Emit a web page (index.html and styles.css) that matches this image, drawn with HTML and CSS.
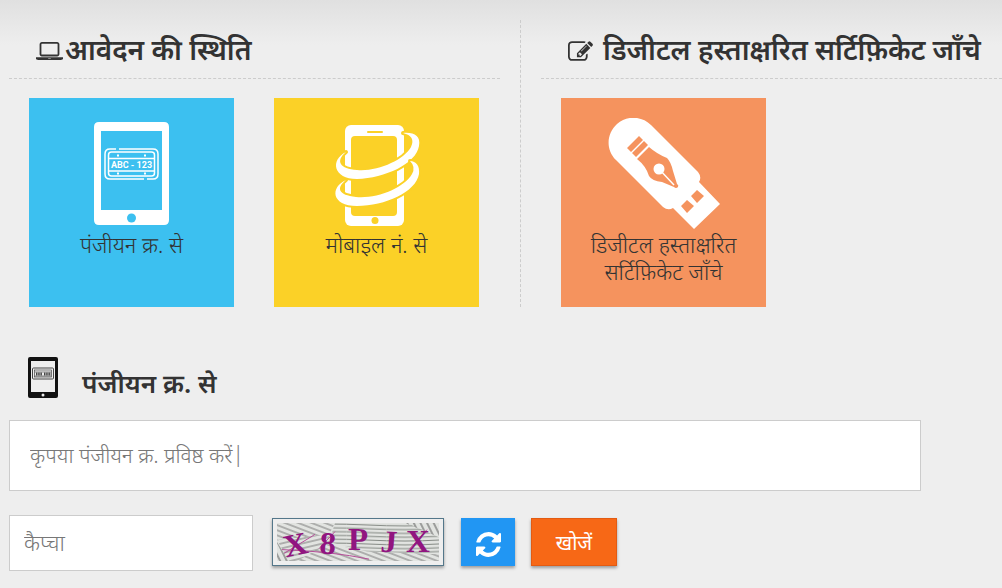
FILE: index.html
```html
<!DOCTYPE html>
<html lang="hi">
<head>
<meta charset="utf-8">
<meta name="viewport" content="width=device-width, initial-scale=1">
<title>आवेदन की स्थिति</title>
<link rel="stylesheet" href="styles.css">
</head>
<body>
<main class="page">
  <div class="services">
    <section class="service service-status">
      <h2 class="service-title">
        <svg class="icon-laptop" viewBox="0 256 1920 1280" aria-hidden="true"><path d="M416 1280q-66 0-113-47t-47-113v-704q0-66 47-113t113-47h1088q66 0 113 47t47 113v704q0 66-47 113t-113 47h-1088zm-32-864v704q0 13 9.500 22.500t22.500 9.500h1088q13 0 22.500-9.500t9.500-22.500v-704q0-13-9.500-22.500t-22.500-9.500h-1088q-13 0-22.500 9.500t-9.500 22.500zm1376 928h160v96q0 40-47 68t-113 28h-1600q-66 0-113-28t-47-68v-96h1760zm-720 96q16 0 16-16t-16-16h-160q-16 0-16 16t16 16h160z"/></svg>
        <span>आवेदन की स्थिति</span>
      </h2>
      <div class="tiles">
        <a class="tile tile-blue" href="#registration">
          <svg class="tile-art" viewBox="0 0 112 112" aria-hidden="true">
            <path fill="#fff" fill-rule="evenodd" d="M23 4h65q5 0 5 5v93q0 5-5 5h-65q-5 0-5-5v-93q0-5 5-5zM25 13v79h61v-79z"/>
            <circle cx="55.500" cy="100" r="4.500" fill="#3cc0f0"/>
            <g fill="none" stroke="#fff">
              <path d="M40 31h-6q-5 0-5 5v20q0 5 5 5h34M43 31h34q5 0 5 5v20q0 5-5 5h-6" stroke-width="1.500"/>
              <rect x="32.500" y="34" width="46" height="24" rx="3" stroke-width="1.500"/>
              <path d="M33 40.500h45M33 53h45" stroke-width="1.500"/>
              <path d="M41 37.500h2M68 37.500h2M41 55.500h2M68 55.500h2" stroke-width="2"/>
            </g>
            <text class="plate-text" x="55.500" y="50" text-anchor="middle">ABC - 123</text>
          </svg>
          <span class="tile-label">पंजीयन क्र. से</span>
        </a>
        <a class="tile tile-yellow" href="#mobile">
          <svg class="tile-art" viewBox="0 0 112 112" aria-hidden="true">
            <rect x="24" y="7" width="59" height="101" rx="6" fill="#fff"/>
            <rect x="30" y="18" width="46" height="80" rx="4" fill="#fbd127"/>
            <path d="M47 14h14" stroke="#fbd127" stroke-width="2" stroke-linecap="round"/>
            <circle cx="54" cy="102.500" r="3.500" fill="#fbd127"/>
            <g class="ring">
              <path d="M25 34C9 42 12 61 36 61C64 60 95 46 98 28C100 18 93 14 82 15Q95 18 90 29C83 42 56 54 36 52C19 51 14 43 25 34z"/>
              <path d="M25 62C9 69 10 88 36 88C64 88 95 74 98 56C99 48 95 43 89 43Q95 49 91 56C83 70 56 81 35 79C17 77 15 70 25 62z"/>
            </g>
          </svg>
          <span class="tile-label">मोबाइल नं. से</span>
        </a>
      </div>
    </section>
    <section class="service service-certificate">
      <h2 class="service-title">
        <svg class="icon-edit" viewBox="0 128 1792 1408" aria-hidden="true"><path d="M888 1184l116-116-152-152-116 116v56h96v96h56zm440-720q-16-16-33 1l-350 350q-17 17-1 33t33-1l350-350q17-17 1-33zm80 594v190q0 119-84.500 203.500t-203.500 84.500h-832q-119 0-203.500-84.500t-84.500-203.500v-832q0-119 84.500-203.500t203.500-84.500h832q63 0 117 25 15 7 18 23 3 17-9 29l-49 49q-14 14-32 8-23-6-45-6h-832q-66 0-113 47t-47 113v832q0 66 47 113t113 47h832q66 0 113-47t47-113v-126q0-13 9-22l64-64q15-15 35-7t20 29zm-96-738l288 288-672 672h-288v-288zm444 132l-92 92-288-288 92-92q28-28 68-28t68 28l152 152q28 28 28 68t-28 68z"/></svg>
        <span>डिजीटल हस्ताक्षरित सर्टिफ़िकेट जाँचे</span>
      </h2>
      <div class="tiles">
        <a class="tile tile-orange" href="#certificate">
          <svg class="tile-art" viewBox="0 0 112 112" aria-hidden="true">
            <path fill="#fff" d="M8 42C-3 31-1 15 9 6C19-3 34-2 43 7L90 54Q94 59 91 64L112 86L86 111L65 90Q60 93 55 89z"/>
            <g fill="#f5935e">
              <path d="M19 30L31 18L35 22L23 34zM24 35L36 23L40 27L28 39z"/>
              <path d="M29 41L41 29Q49 36 59 40Q63 44 65 53L69 66Q71 67 70 69Q68 71 66 69L54 64Q44 63 41 58Q38 48 29 41z"/>
              <path d="M73 88L79 82L86 88L79 95zM83 78L89 72L96 78L89 85z"/>
            </g>
            <path d="M51 51L66 67" stroke="#fff" stroke-width="1.500"/>
            <circle cx="51" cy="51" r="5.500" fill="#fff"/>
          </svg>
          <span class="tile-label">डिजीटल हस्ताक्षरित सर्टिफ़िकेट जाँचे</span>
        </a>
      </div>
    </section>
  </div>

  <form class="search" id="registration">
    <h2 class="search-title">
      <svg class="icon-tablet" viewBox="0 0 30 41" aria-hidden="true">
        <path fill="#111" fill-rule="evenodd" d="M2 0h26q2 0 2 2v37q0 2-2 2h-26q-2 0-2-2v-37q0-2 2-2zM3 4v31h24v-31z"/>
        <circle cx="15" cy="38" r="1.500" fill="#eee"/>
        <g fill="none" stroke="#444">
          <rect x="4.500" y="11" width="21" height="11" rx="1" stroke-width="1"/>
          <rect x="6.500" y="13" width="17" height="7" stroke-width=".7"/>
          <path d="M7 15h16M7 19h16" stroke-width=".6"/>
          <path d="M8 17h6M16 17h7" stroke-width="3" stroke-dasharray="1.500 .7"/>
        </g>
      </svg>
      <label for="reg-no">पंजीयन क्र. से</label>
    </h2>
    <input class="field field-registration" id="reg-no" type="text" placeholder="कृपया पंजीयन क्र. प्रविष्ठ करें|">
    <div class="verify">
      <input class="field field-captcha" type="text" placeholder="कैप्चा" aria-label="कैप्चा">
      <svg class="captcha" viewBox="0 0 162 40" preserveAspectRatio="none" role="img" aria-label="X8PJX">
        <defs>
          <pattern id="fan" width="162" height="4" patternUnits="userSpaceOnUse"><path d="M0 2Q50 0 90 2T162 2" fill="none" stroke="#7d827d" stroke-width="1"/></pattern>
          <pattern id="hatch" width="5" height="5" patternUnits="userSpaceOnUse" patternTransform="rotate(22)"><path d="M0 2h5" stroke="#777" stroke-width="1"/></pattern>
          <pattern id="hatch-rise" width="5" height="5" patternUnits="userSpaceOnUse" patternTransform="rotate(-14)"><path d="M0 2h5" stroke="#777" stroke-width="1"/></pattern>
          <pattern id="hatch-steep" width="6" height="6" patternUnits="userSpaceOnUse" patternTransform="rotate(65)"><path d="M0 2h6" stroke="#555" stroke-width="1"/></pattern>
        </defs>
        <rect width="162" height="40" fill="#e2e4e1"/>
        <path d="M58 0H130L162 15V33L90 30L52 20z" fill="url(#fan)"/>
        <path d="M0 0H58L52 12L0 18zM50 22L90 30L162 33V40H20z" fill="url(#hatch)"/>
        <path d="M0 18L52 12V22L20 40H12z" fill="url(#hatch-rise)"/>
        <path d="M128 0H162V15zM0 20L12 40H0z" fill="url(#hatch-steep)"/>
        <path d="M7 32L38 12M42 27L58 9M5 28Q55 30 92 38M132 28L150 7" fill="none" stroke="#b54a97" stroke-width="1"/>
        <g class="captcha-text">
          <text transform="translate(9 36) rotate(-12)">X</text>
          <text transform="translate(42 32) rotate(3)">8</text>
          <text transform="translate(71 28)">P</text>
          <text transform="translate(103 30) rotate(4)">J</text>
          <text transform="translate(129 30)">X</text>
        </g>
      </svg>
      <button class="btn btn-refresh" type="button" aria-label="Refresh">
        <svg class="icon-refresh" viewBox="128 128 1536 1536" aria-hidden="true"><path d="M1639 1056q0 5-1 7-64 268-268 434.500t-478 166.500q-146 0-282.500-55t-243.500-157l-129 129q-19 19-45 19t-45-19-19-45v-448q0-26 19-45t45-19h448q26 0 45 19t19 45-19 45l-137 137q71 66 161 102t187 36q134 0 250-65t186-179q11-17 53-117 8-23 30-23h192q13 0 22.500 9.500t9.500 22.500zm25-800v448q0 26-19 45t-45 19h-448q-26 0-45-19t-19-45 19-45l138-138q-148-137-349-137-134 0-250 65t-186 179q-11 17-53 117-8 23-30 23h-199q-13 0-22.500-9.500t-9.500-22.500v-7q65-268 270-434.500t480-166.500q146 0 284 55.500t245 156.500l130-129q19-19 45-19t45 19 19 45z"/></svg>
      </button>
      <button class="btn btn-search" type="submit">खोजें</button>
    </div>
  </form>
</main>
</body>
</html>
```

FILE: styles.css
```css
* {
  box-sizing: border-box;
}

body {
  margin: 0;
  min-height: 100vh;
  background: linear-gradient(#e0e0e0, #eee 45px) #eee;
  color: #333;
  font-family: "Noto Sans Devanagari", "Noto Sans", sans-serif;
  font-size: 22px;
  overflow-x: hidden;
}

.page {
  padding-top: 20px;
}

.services {
  display: grid;
  grid-template-columns: 52% 1fr;
}

.service-status {
  padding: 0 20px 0 9px;
  border-right: 1px dashed #ccc;
}

.service-certificate {
  padding-left: 20px;
}

.service-title {
  display: flex;
  align-items: center;
  height: 59px;
  margin: 0 0 19px;
  padding: 3px 0 0 27px;
  border-bottom: 1px dashed #ccc;
  font-size: 28px;
  font-weight: 600;
  white-space: nowrap;
}

.service-title span {
  padding-top: 5px;
}

.icon-laptop,
.icon-edit {
  flex: none;
  fill: #333;
}

.icon-laptop {
  width: 27px;
  height: 18px;
  margin-right: 2px;
}

.icon-edit {
  width: 25px;
  height: 20px;
  margin-right: 10px;
}

.tiles {
  display: flex;
  gap: 40px;
  padding-left: 20px;
}

.tile {
  display: flex;
  flex-direction: column;
  align-items: center;
  width: 205px;
  min-height: 209px;
  padding: 20px 16px 16px;
  color: #333;
  font-weight: 300;
  line-height: 27px;
  text-align: center;
  text-decoration: none;
}

.tile-blue {
  background: #3cc0f0;
}

.tile-yellow {
  background: #fbd127;
}

.tile-orange {
  background: #f5935e;
}

.tile-art {
  flex: none;
  width: 112px;
  height: 112px;
  margin-bottom: 4px;
}

.ring {
  fill: #fff;
  stroke: #fbd127;
  stroke-width: 4px;
  stroke-linejoin: round;
  paint-order: stroke;
}

.plate-text {
  fill: #fff;
  font-family: "Liberation Sans Narrow", Roboto, sans-serif;
  font-size: 9px;
  font-weight: 700;
}

.search {
  padding: 50px 81px 17px 9px;
}

.search-title {
  display: flex;
  align-items: center;
  gap: 24px;
  height: 41px;
  margin: 0 0 22px;
  padding-left: 19px;
  font-size: 26px;
  font-weight: 600;
}

.search-title label {
  padding-top: 18px;
}

.icon-tablet {
  width: 30px;
  height: 41px;
}

.field {
  border: 1px solid #ccc;
  border-radius: 0;
  background: #fff;
  color: #333;
  font: inherit;
  font-weight: 300;
}

.field::placeholder {
  color: #777;
  opacity: 1;
}

.field-registration {
  display: block;
  width: 100%;
  height: 71px;
  padding: 5px 20px 0;
  font-size: 21px;
}

.verify {
  display: flex;
  align-items: flex-start;
  margin-top: 24px;
}

.field-captcha {
  width: 244px;
  height: 56px;
  margin-right: 19px;
  padding: 5px 14px 0;
}

.captcha,
.btn {
  flex: none;
  height: 48px;
  margin-top: 3px;
  box-shadow: 0 2px 3px rgba(0, 0, 0, 0.35);
}

.captcha {
  width: 172px;
  margin-right: 17px;
  padding: 4px;
  border: 1px solid #54778a;
  background: #eee;
}

.captcha-text {
  fill: #911580;
  font-family: "Liberation Serif", serif;
  font-size: 33px;
  font-weight: 700;
}

.btn {
  display: flex;
  align-items: center;
  justify-content: center;
  padding: 5px 0 0;
  border: 0;
  color: #fff;
  font: inherit;
  cursor: pointer;
}

.btn-refresh {
  width: 54px;
  margin-right: 16px;
  background: #2196f3;
}

.icon-refresh {
  width: 25px;
  height: 25px;
  fill: #fff;
}

.btn-search {
  width: 86px;
  border: 1px solid #e35b12;
  background: #f76816;
  font-size: 20px;
}
```
